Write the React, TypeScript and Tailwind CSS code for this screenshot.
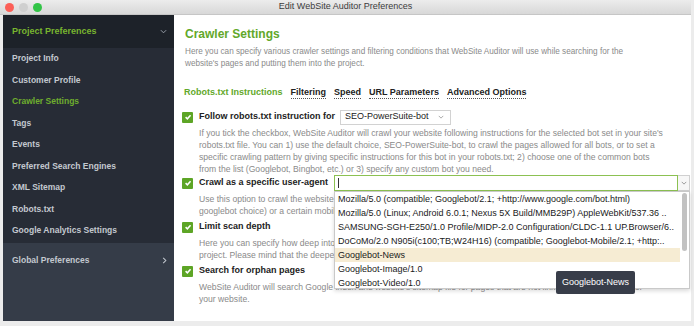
import React from 'react';

const sidebarItems = [
  'Project Info',
  'Customer Profile',
  'Crawler Settings',
  'Tags',
  'Events',
  'Preferred Search Engines',
  'XML Sitemap',
  'Robots.txt',
  'Google Analytics Settings',
];

const agents = [
  'Mozilla/5.0 (compatible; Googlebot/2.1; +http://www.google.com/bot.html)',
  'Mozilla/5.0 (Linux; Android 6.0.1; Nexus 5X Build/MMB29P) AppleWebKit/537.36 ..',
  'SAMSUNG-SGH-E250/1.0 Profile/MIDP-2.0 Configuration/CLDC-1.1 UP.Browser/6..',
  'DoCoMo/2.0 N905i(c100;TB;W24H16) (compatible; Googlebot-Mobile/2.1; +http:..',
  'Googlebot-News',
  'Googlebot-Image/1.0',
  'Googlebot-Video/1.0',
];

function Check() {
  return (
    <span className="flex h-[11px] w-[11px] shrink-0 items-center justify-center rounded-[1px] bg-[#5da526]">
      <svg viewBox="0 0 10 10" className="h-[8px] w-[8px]">
        <path d="M2 5.2 L4.2 7.3 L8.2 2.8" fill="none" stroke="white" strokeWidth="1.9" />
      </svg>
    </span>
  );
}

function Chevron({ className }: { className?: string }) {
  return (
    <svg viewBox="0 0 8 5" className={className}>
      <path d="M1 1 L4 4 L7 1" fill="none" stroke="currentColor" strokeWidth="1.1" />
    </svg>
  );
}

function Sidebar() {
  return (
    <aside className="flex w-[171px] shrink-0 flex-col bg-[#353c48] font-bold">
      <div className="flex h-[33px] items-center justify-between bg-[#1d2229] pl-[9px] pr-[7px] text-[9px] text-[#78b52f]">
        <span>Project Preferences</span>
        <Chevron className="h-[5px] w-[7px] text-[#9aa1ab]" />
      </div>
      <div className="bg-[#272c36] pb-[1.5px]">
        {sidebarItems.map((item) => (
          <div
            key={item}
            className={`flex h-[21.5px] items-center pl-[9px] text-[8.5px] ${
              item === 'Crawler Settings' ? 'text-[#6fae2e]' : 'text-[#c3c8cf]'
            }`}
          >
            {item}
          </div>
        ))}
      </div>
      <div className="flex h-[34px] items-center justify-between pl-[9px] pr-[7px] text-[8.5px] text-[#c3c8cf]">
        <span>Global Preferences</span>
        <svg viewBox="0 0 5 8" className="h-[7px] w-[5px] text-[#c3c8cf]">
          <path d="M1 1 L4 4 L1 7" fill="none" stroke="currentColor" strokeWidth="1.2" />
        </svg>
      </div>
    </aside>
  );
}

function Main() {
  return (
    <main className="flex-1 bg-white pl-[8px] pr-[1px] text-[#222]">
      <h1 className="ml-[3px] mt-[11px] text-[12px] font-bold leading-[16px] text-[#62a82a]">Crawler Settings</h1>
      <p className="ml-[3px] mt-[4px] whitespace-nowrap text-[8.2px] leading-[12px] text-[#8a8a8a]">
        Here you can specify various crawler settings and filtering conditions that WebSite Auditor will use while searching for the
        <br />
        website's pages and putting them into the project.
      </p>
      <div className="ml-[2px] mt-[16px] flex gap-[8px] text-[9px] font-bold leading-[12px]">
        <span className="text-[#62a82a]">Robots.txt Instructions</span>
        <span className="border-b border-dotted border-[#555]">Filtering</span>
        <span className="border-b border-dotted border-[#555]">Speed</span>
        <span className="border-b border-dotted border-[#555]">URL Parameters</span>
        <span className="border-b border-dotted border-[#555]">Advanced Options</span>
      </div>

      <div className="mt-[10px] flex h-[16px] items-center gap-[6px]">
        <Check />
        <span className="text-[9px] font-bold">Follow robots.txt instruction for</span>
        <div className="ml-[-1px] flex h-[15px] w-[111px] items-center justify-between border border-[#d2d2d2] pl-[4px] pr-[6px] text-[9px]">
          <span>SEO-PowerSuite-bot</span>
          <Chevron className="h-[4px] w-[6px] text-[#999]" />
        </div>
      </div>
      <p className="mt-[2px] whitespace-nowrap pl-[17px] text-[8.6px] leading-[12px] text-[#8a8a8a]">
        If you tick the checkbox, WebSite Auditor will crawl your website following instructions for the selected bot set in your site's
        <br />
        robots.txt file. You can 1) use the default choice, SEO-PowerSuite-bot, to crawl the pages allowed for all bots, or to set a
        <br />
        specific crawling pattern by giving specific instructions for this bot in your robots.txt; 2) choose one of the common bots
        <br />
        from the list (Googlebot, Bingbot, etc.) or 3) specify any custom bot you need.
      </p>

      <div className="flex h-[16px] items-center gap-[6px]">
        <Check />
        <span className="text-[9px] font-bold">Crawl as a specific user-agent</span>
        <div className="relative flex h-[16px] flex-1 items-stretch">
          <div className="flex flex-1 items-center border border-[#8cc152] pl-[3px]">
            <span className="h-[10px] w-px bg-[#333]" />
          </div>
          <div className="flex w-[12px] items-center justify-center border-y border-r border-[#d0d0d0] bg-[#f7f7f7]">
            <Chevron className="h-[4px] w-[6px] text-[#888]" />
          </div>
          <div className="absolute left-0 right-0 top-full z-10 flex h-[98px] border border-[#c9c9c9] bg-white shadow-[0_2px_4px_rgba(0,0,0,0.15)]">
            <ul className="flex-1 overflow-hidden text-[9px] leading-[14px] text-[#1a1a1a]">
              {agents.map((a) => (
                <li
                  key={a}
                  className={`whitespace-nowrap pl-[3px] ${a === 'Googlebot-News' ? 'bg-[#f6ecd3]' : ''}`}
                >
                  {a}
                </li>
              ))}
            </ul>
            <div className="w-[9px] pt-[1px]">
              <div className="mx-auto h-[58px] w-[5px] rounded-full bg-[#c2c2c2]" />
            </div>
            <div className="absolute left-[221px] top-[79px] flex h-[23px] w-[79px] items-center justify-center rounded-[2px] bg-[#383d49] text-[9px] text-white">
              Googlebot-News
            </div>
          </div>
        </div>
      </div>
      <p className="mt-[2px] whitespace-nowrap pl-[17px] text-[8.6px] leading-[12px] text-[#8a8a8a]">
        Use this option to crawl the website as a specific user agent: choose one from the list (e.g. Googlebot,
        <br />
        googlebot choice) or a certain mobile device user agent.
      </p>

      <div className="mt-[2px] flex h-[16px] items-center gap-[6px]">
        <Check />
        <span className="text-[9px] font-bold">Limit scan depth</span>
      </div>
      <p className="mt-[2px] whitespace-nowrap pl-[17px] text-[8.6px] leading-[12px] text-[#8a8a8a]">
        Here you can specify how deep into the website's structure WebSite Auditor should go when collecting pages for the
        <br />
        project. Please mind that the deeper the scan, the more time it takes.
      </p>

      <div className="mt-[2px] flex h-[16px] items-center gap-[6px]">
        <Check />
        <span className="text-[9px] font-bold">Search for orphan pages</span>
      </div>
      <p className="mt-[2px] whitespace-nowrap pl-[17px] text-[8.6px] leading-[12px] text-[#8a8a8a]">
        WebSite Auditor will search Google index and website's sitemap file for pages that are not linked from other pages of
        <br />
        your website.
      </p>
    </main>
  );
}

export default function App() {
  return (
    <div className="h-[326px] w-[694px] overflow-hidden bg-[#ececec] font-['Liberation_Sans',Arial,sans-serif]">
      <div className="flex h-[321px] w-[691px] flex-col">
        <div className="grid h-[15px] grid-cols-[1fr_auto_1fr] items-center border-b border-[#c6c6c6] bg-gradient-to-b from-[#ececec] to-[#d8d8d8]">
          <div className="flex gap-[5px] pl-[5px]">
            <span className="h-[9px] w-[9px] rounded-full bg-[#fc5f57]" />
            <span className="h-[9px] w-[9px] rounded-full bg-[#cfcfcf]" />
            <span className="h-[9px] w-[9px] rounded-full bg-[#31c446]" />
          </div>
          <span className="text-[9px] text-[#3c3c3c]">Edit WebSite Auditor Preferences</span>
          <span />
        </div>
        <div className="flex flex-1 pl-[3px]">
          <Sidebar />
          <Main />
        </div>
      </div>
    </div>
  );
}
